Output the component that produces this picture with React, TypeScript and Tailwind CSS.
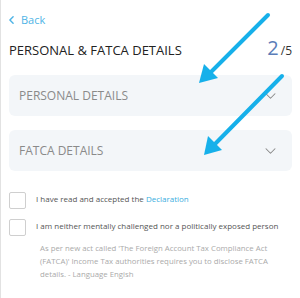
import React from "react";

function Chevron({ className }: { className?: string }) {
  return (
    <svg viewBox="0 0 14 8" className={className} fill="none" stroke="currentColor" strokeWidth="1.4" strokeLinecap="round" strokeLinejoin="round">
      <path d="M1 1l6 6 6-6" />
    </svg>
  );
}

function Section({ title }: { title: string }) {
  return (
    <div className="flex h-[41px] items-center justify-between rounded-md bg-[#f3f6f9] pl-[10px] pr-[16px]">
      <span className="text-[12px] text-[#8a8a8a]">{title}</span>
      <Chevron className="h-[6px] w-[11px] text-[#888]" />
    </div>
  );
}

function Check({ children }: { children: React.ReactNode }) {
  return (
    <div className="flex items-start gap-[10px]">
      <div className="h-[17px] w-[17px] shrink-0 rounded-[2px] border border-[#cfcfcf] bg-white" />
      <div className="pt-[1px] text-[8px] leading-[12px] text-[#555]">{children}</div>
    </div>
  );
}

export default function App() {
  return (
    <div className="relative h-[298px] w-[300px] overflow-hidden border-l border-[#e2e2e2] bg-white px-[8px] font-['Open_Sans',sans-serif]">
      {/* back link */}
      <div className="flex items-center gap-[7px] pt-[13px] text-[#4fb4e6]">
        <svg viewBox="0 0 6 10" className="h-[8px] w-[5px]" fill="none" stroke="currentColor" strokeWidth="1.8" strokeLinecap="round" strokeLinejoin="round">
          <path d="M5 1L1 5l4 4" />
        </svg>
        <span className="text-[11px] leading-[14px]">Back</span>
      </div>

      {/* title + step */}
      <div className="mt-[11px] flex items-baseline justify-between">
        <h1 className="text-[13px] leading-[18px] text-[#222]">PERSONAL &amp; FATCA DETAILS</h1>
        <div className="flex items-baseline">
          <span className="text-[20px] leading-[20px] text-[#5b7db8]">2</span>
          <span className="ml-[2px] text-[12px] text-[#333]">/5</span>
        </div>
      </div>

      {/* sections */}
      <div className="mt-[15px] flex flex-col gap-[14px]">
        <Section title="PERSONAL DETAILS" />
        <Section title="FATCA DETAILS" />
      </div>

      {/* declarations */}
      <div className="mt-[21px] flex flex-col gap-[10px]">
        <Check>
          I have read and accepted the <span className="text-[#3aaee0]">Declaration</span>
        </Check>
        <Check>I am neither mentally challenged nor a politically exposed person</Check>
      </div>
      <p className="mt-[6px] pl-[31px] pr-[10px] text-[7.8px] leading-[13px] text-[#aaa]">
        As per new act called 'The Foreign Account Tax Compliance Act (FATCA)' Income Tax authorities requires you to disclose FATCA details. - Language Engish
      </p>

      {/* annotation arrows */}
      <svg className="pointer-events-none absolute left-0 top-0" width="300" height="298" viewBox="0 0 300 298">
        <g stroke="#16b0ea" strokeWidth="4" strokeLinecap="round">
          <line x1="267" y1="15" x2="207" y2="75" />
          <line x1="281" y1="76" x2="212" y2="146" />
        </g>
        <g fill="#16b0ea">
          <polygon points="198,83 203,64 217,78" />
          <polygon points="203,155 207,136 221,150" />
        </g>
      </svg>
    </div>
  );
}
